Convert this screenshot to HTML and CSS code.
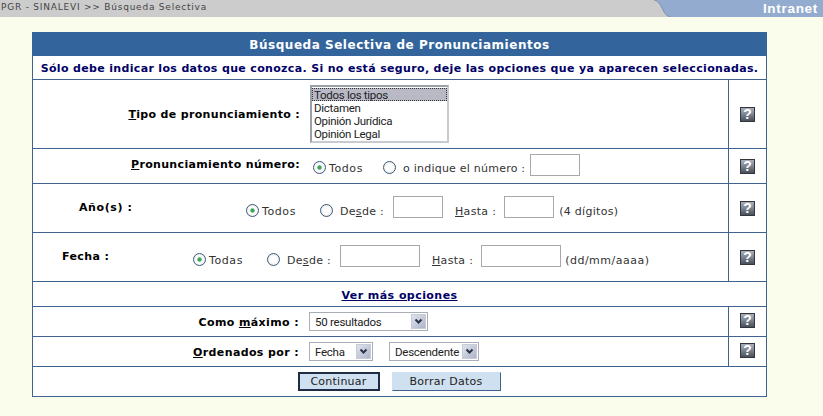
FILE: index.html
```html
<!DOCTYPE html>
<html lang="es">
<head>
<meta charset="utf-8">
<title>Búsqueda Selectiva</title>
<link rel="stylesheet" href="styles.css">
</head>
<body>
<header class="topbar">
  <div class="crumb">PGR - SINALEVI &gt;&gt; Búsqueda Selectiva</div>
  <svg class="curve" width="18" height="17" viewBox="0 0 18 17"><path d="M0 0H2C7 1 9 6 11 10C13 14 15 16 18 17H0Z" fill="#cccccc"/><path d="M2 0C7 1 9 6 11 10C13 14 15 16 18 17" fill="none" stroke="#7f8ea8" stroke-width="1"/></svg>
  <div class="intranet">Intranet</div>
</header>
<main class="panel">
  <h1 class="title">Búsqueda Selectiva de Pronunciamientos</h1>
  <p class="note">Sólo debe indicar los datos que conozca. Si no está seguro, deje las opciones que ya aparecen seleccionadas.</p>

  <div class="row h69">
    <div class="cell">
      <label class="lbl lbl-wide"><u>T</u>ipo de pronunciamiento :</label>
      <div class="listbox">
        <div class="item sel">Todos los tipos</div>
        <div class="item">Dictamen</div>
        <div class="item">Opinión Jurídica</div>
        <div class="item">Opinión Legal</div>
      </div>
    </div>
    <div class="help"><span class="q">?</span></div>
  </div>

  <div class="row h35">
    <div class="cell">
      <label class="lbl lbl-wide"><u>P</u>ronunciamiento número:</label>
      <input class="radio r-first" type="radio" name="n" checked>
      <span class="txt t-todos">Todos</span>
      <input class="radio r-n2" type="radio" name="n">
      <span class="txt t-ind">o indique el número :</span>
      <input class="box b50 b-n" type="text">
    </div>
    <div class="help"><span class="q">?</span></div>
  </div>

  <div class="row h49">
    <div class="cell pad-year">
      <label class="lbl lbl-year">Año(s) :</label>
      <input class="radio" type="radio" name="y" checked>
      <span class="txt t-todos">Todos</span>
      <input class="radio r-y2" type="radio" name="y">
      <span class="txt t-desde">De<u>s</u>de :</span>
      <input class="box b50 b-d" type="text">
      <span class="txt t-hasta"><u>H</u>asta :</span>
      <input class="box b50 b-h" type="text">
      <span class="txt t-hint">(4 dígitos)</span>
    </div>
    <div class="help"><span class="q">?</span></div>
  </div>

  <div class="row h49">
    <div class="cell pad-date">
      <label class="lbl lbl-date">Fecha :</label>
      <input class="radio" type="radio" name="f" checked>
      <span class="txt t-todos">Todas</span>
      <input class="radio r-y2" type="radio" name="f">
      <span class="txt t-desde">De<u>s</u>de :</span>
      <input class="box b80 b-d" type="text">
      <span class="txt t-hasta"><u>H</u>asta :</span>
      <input class="box b80 b-h" type="text">
      <span class="txt t-hint2">(dd/mm/aaaa)</span>
    </div>
    <div class="help"><span class="q">?</span></div>
  </div>

  <div class="row-full h25"><a class="more" href="#">Ver más opciones</a></div>

  <div class="row h30">
    <div class="cell">
      <label class="lbl lbl-wide lbl-drop">Como <u>m</u>áximo :</label>
      <div class="drop d-max"><span>50 resultados</span><span class="arrow"><svg width="11" height="11" viewBox="0 0 11 11"><path d="M2.5 3.5L5.5 6.5L8.5 3.5" fill="none" stroke="#2a3448" stroke-width="2"/></svg></span></div>
    </div>
    <div class="help"><span class="q">?</span></div>
  </div>

  <div class="row h30">
    <div class="cell">
      <label class="lbl lbl-wide lbl-drop"><u>O</u>rdenados por :</label>
      <div class="drop d-fecha"><span>Fecha</span><span class="arrow"><svg width="11" height="11" viewBox="0 0 11 11"><path d="M2.5 3.5L5.5 6.5L8.5 3.5" fill="none" stroke="#2a3448" stroke-width="2"/></svg></span></div>
      <div class="drop d-orden"><span>Descendente</span><span class="arrow"><svg width="11" height="11" viewBox="0 0 11 11"><path d="M2.5 3.5L5.5 6.5L8.5 3.5" fill="none" stroke="#2a3448" stroke-width="2"/></svg></span></div>
    </div>
    <div class="help"><span class="q">?</span></div>
  </div>

  <div class="row-full h30 actions">
    <button class="btn btn-main" type="button">Continuar</button>
    <button class="btn btn-alt" type="button">Borrar Datos</button>
  </div>
</main>
</body>
</html>
```
FILE: styles.css
```css
* { box-sizing: border-box; }
html, body { margin: 0; padding: 0; }
body {
  background: #fafdeb;
  font-family: "DejaVu Sans", Verdana, sans-serif;
  font-size: 11px;
  color: #333;
  height: 416px;
  overflow: hidden;
}
.topbar { display: flex; height: 17px; background: #94abd0; }
.crumb {
  width: 652px;
  background: #ccc;
  color: #444;
  font-size: 9px;
  letter-spacing: .78px;
  line-height: 14px;
  padding-left: 1px;
  white-space: nowrap;
}
.curve { display: block; flex: none; }
.intranet {
  margin-left: auto;
  padding-right: 5px;
  color: #fff;
  font-family: "Liberation Sans", Arial, sans-serif;
  font-weight: 700;
  font-size: 13.5px;
  letter-spacing: .7px;
  line-height: 18px;
}
.panel {
  width: 735px;
  margin: 15px 0 0 32px;
  background: #fff;
  border: 1px solid #3f638c;
  border-top: 0;
  border-bottom: 0;
}
.title {
  margin: 0 -1px;
  height: 24px;
  background: #33659c;
  color: #fff;
  font-size: 12px;
  font-weight: 700;
  letter-spacing: .53px;
  line-height: 26px;
  text-align: center;
}
.note {
  margin: 0;
  height: 24px;
  border-bottom: 1px solid #3f638c;
  color: #000066;
  font-size: 11px;
  font-weight: 700;
  letter-spacing: .34px;
  line-height: 25px;
  text-align: center;
  white-space: nowrap;
}
.row {
  display: grid;
  grid-template-columns: 696px 1fr;
  border-bottom: 1px solid #3f638c;
}
.row-full {
  display: flex;
  align-items: center;
  justify-content: center;
  border-bottom: 1px solid #3f638c;
}
.h69 { height: 69px; }
.h35 { height: 35px; }
.h49 { height: 49px; }
.h25 { height: 25px; }
.h30 { height: 30px; }
.cell {
  display: flex;
  align-items: center;
  border-right: 1px solid #3f638c;
  white-space: nowrap;
}
.pad-year { padding-left: 46px; }
.pad-date { padding-left: 29px; }
.help { display: flex; align-items: center; justify-content: center; }
.q {
  display: block;
  width: 15px;
  height: 15px;
  border: 1px solid #33363c;
  background: linear-gradient(180deg, #a9afba 0%, #808896 45%, #4a505a 100%);
  color: #fff;
  font-family: "Liberation Sans", Arial, sans-serif;
  font-size: 14px;
  font-weight: 700;
  line-height: 13px;
  text-align: center;
}
.h30 .q { margin-top: -2px; }
.lbl {
  color: #000;
  font-weight: 700;
  font-size: 11px;
  letter-spacing: .33px;
  flex: none;
}
.lbl-wide { width: 267px; text-align: right; margin-right: 10px; }
.lbl-drop { margin-right: 10px; margin-top: 1px; width: 266px; letter-spacing: .38px; }
.lbl-year { width: 167px; margin-top: -2px; letter-spacing: .6px; }
.lbl-date { width: 131px; margin-top: -2px; letter-spacing: .4px; }
.h35 .lbl-wide { margin-top: -3px; margin-right: 13px; }
.listbox {
  width: 139px;
  height: 58px;
  border: 2px solid;
  border-color: #9aa0a8 #c6cbd2 #c6cbd2 #9aa0a8;
  background: #fff;
  padding: 1px 0 0;
  font-family: "Liberation Sans Narrow", "Roboto", "Liberation Sans", sans-serif;
  font-size: 11.5px;
  letter-spacing: -.3px;
  color: #222;
}
.item { height: 13px; line-height: 15px; padding-left: 2px; }
.sel {
  background: #b9b9c6;
  outline: 1px dotted #333;
  outline-offset: -1px;
}
.radio {
  appearance: none;
  width: 13px;
  height: 13px;
  margin: 3px 0 0;
  flex: none;
  border: 1px solid #3d5a78;
  border-radius: 50%;
  background: radial-gradient(circle, #fff 40%, #d6d9dc 100%);
}
.h49 .radio { margin-top: 5px; }
.radio:checked {
  background: radial-gradient(circle, #3fa45e 0, #3fa45e 22%, #fff 34%, #e4e6e8 100%);
}
.txt {
  color: #333;
  font-size: 11px;
  letter-spacing: .3px;
  margin-top: 4px;
  flex: none;
}
.h49 .txt { margin-top: 6px; }
.t-todos { margin-left: 3px; width: 33px; letter-spacing: .6px; }
.r-n2 { margin-left: 21px; }
.t-ind { margin-left: 7px; letter-spacing: .23px; }
.b-n { margin-left: 5px; margin-top: -2px; }
.r-y2 { margin-left: 25px; }
.t-desde { margin-left: 7px; }
.box {
  height: 22px;
  border: 1px solid #a8a8a8;
  background: #fff;
  padding: 0;
  flex: none;
}
.b50 { width: 50px; }
.b80 { width: 80px; }
.b-d { margin-left: 9px; margin-top: -2px; }
.t-hasta { margin-left: 12px; }
.b-h { margin-left: 8px; margin-top: -2px; }
.t-hint { margin-left: 5px; }
.t-hint2 { margin-left: 4px; letter-spacing: .5px; }
.more {
  margin-top: 2px;
  color: #000066;
  font-weight: 700;
  font-size: 11px;
  letter-spacing: .44px;
  text-decoration: underline;
}
.drop {
  display: flex;
  align-items: center;
  justify-content: space-between;
  height: 19px;
  padding: 0 1px 0 5px;
  border: 1px solid #a9adb5;
  background: #fff;
  color: #222;
  font-family: "Liberation Sans Narrow", "Roboto", "Liberation Sans", sans-serif;
  font-size: 11.5px;
  letter-spacing: -.25px;
  flex: none;
}
.d-max { width: 119px; }
.d-fecha { width: 64px; }
.d-orden { width: 90px; margin-left: 16px; }
.arrow {
  display: flex;
  align-items: center;
  justify-content: center;
  width: 15px;
  height: 15px;
  background: linear-gradient(135deg, #dfe3ec, #aeb5ca);
  border: 1px solid #c8ccd8;
}
.actions { gap: 12px; padding-right: 1px; }
.btn {
  height: 19px;
  padding: 0;
  background: #cfe0f0;
  color: #222;
  font-family: "DejaVu Sans", Verdana, sans-serif;
  font-size: 11px;
  letter-spacing: .25px;
}
.btn-main { width: 82px; border: 2px solid; border-color: #1e2c44; margin-top: -1px; }
.btn-alt { width: 109px; border: 1px solid; border-color: #cfe0f0 #3f638c #3f638c #cfe0f0; margin-top: -1px; }
```
